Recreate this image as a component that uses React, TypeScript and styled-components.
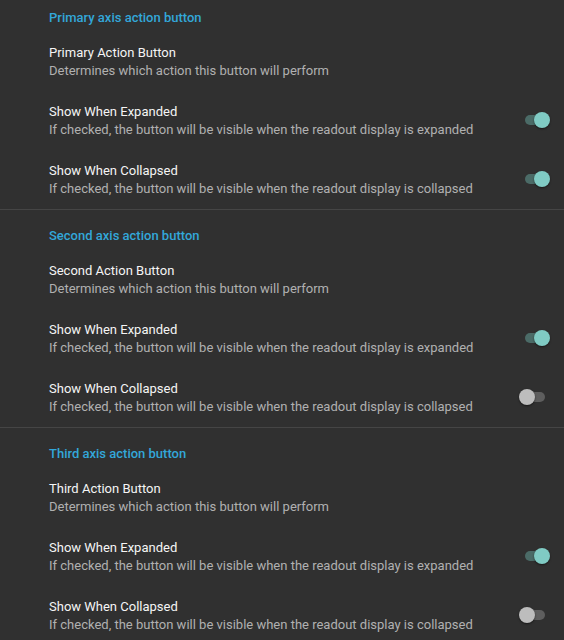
import React from 'react';
import styled, { createGlobalStyle } from 'styled-components';

const GlobalStyle = createGlobalStyle`
    html, body {
        margin: 0;
        padding: 0;
        background: #303030;
        overflow: hidden;
    }
    body {
        font-family: Roboto, 'Liberation Sans', sans-serif;
        -webkit-font-smoothing: antialiased;
    }
`;

const Screen = styled.div`
    width: 564px;
    height: 640px;
    overflow: hidden;
    background: #303030;
`;

// list is scrolled a few px, as in the capture
const List = styled.div`
    margin-top: -8px;
`;

const Section = styled.section`
    border-bottom: 1px solid #454545;
`;

const SectionTitle = styled.div`
    padding: 17px 0 5px 49px;
    font-size: 13px;
    font-weight: 500;
    line-height: 18px;
    color: #33a7d9;
`;

const Item = styled.div`
    display: flex;
    align-items: center;
    padding: 12px 14px 11px 49px;
`;

const ItemText = styled.div`
    flex: 1;
    min-width: 0;
`;

const ItemTitle = styled.div`
    font-size: 13px;
    line-height: 18px;
    color: #f5f5f5;
`;

const ItemSummary = styled.div`
    font-size: 13px;
    line-height: 18px;
    color: #b0b0b0;
`;

const Switch = styled.div<{ $on: boolean }>`
    position: relative;
    width: 31px;
    height: 16px;
    flex: none;
    margin-top: -2px;

    &::before {
        content: '';
        position: absolute;
        left: 6px;
        top: 3px;
        width: 20px;
        height: 10px;
        border-radius: 5px;
        background: ${(p) => (p.$on ? '#4b6b67' : '#5e5e5e')};
    }

    &::after {
        content: '';
        position: absolute;
        top: 0;
        left: ${(p) => (p.$on ? '15px' : '0')};
        width: 16px;
        height: 16px;
        border-radius: 50%;
        background: ${(p) => (p.$on ? '#80cbc4' : '#bdbdbd')};
        box-shadow: 0 1px 2px rgba(0, 0, 0, 0.5);
    }
`;

type Row = { title: string; summary: string; toggle?: boolean };

const sections: { name: string; action: string; expanded: boolean; collapsed: boolean }[] = [
    { name: 'Primary axis action button', action: 'Primary Action Button', expanded: true, collapsed: true },
    { name: 'Second axis action button', action: 'Second Action Button', expanded: true, collapsed: false },
    { name: 'Third axis action button', action: 'Third Action Button', expanded: true, collapsed: false },
];

const rowsFor = (s: (typeof sections)[number]): Row[] => [
    { title: s.action, summary: 'Determines which action this button will perform' },
    {
        title: 'Show When Expanded',
        summary: 'If checked, the button will be visible when the readout display is expanded',
        toggle: s.expanded,
    },
    {
        title: 'Show When Collapsed',
        summary: 'If checked, the button will be visible when the readout display is collapsed',
        toggle: s.collapsed,
    },
];

const App = () => {
    return (
        <Screen>
            <GlobalStyle />
            <List>
                {sections.map((s) => (
                    <Section key={s.name}>
                        <SectionTitle>{s.name}</SectionTitle>
                        {rowsFor(s).map((r) => (
                            <Item key={r.title}>
                                <ItemText>
                                    <ItemTitle>{r.title}</ItemTitle>
                                    <ItemSummary>{r.summary}</ItemSummary>
                                </ItemText>
                                {r.toggle !== undefined && <Switch $on={r.toggle} />}
                            </Item>
                        ))}
                    </Section>
                ))}
            </List>
        </Screen>
    );
};

export default App;
